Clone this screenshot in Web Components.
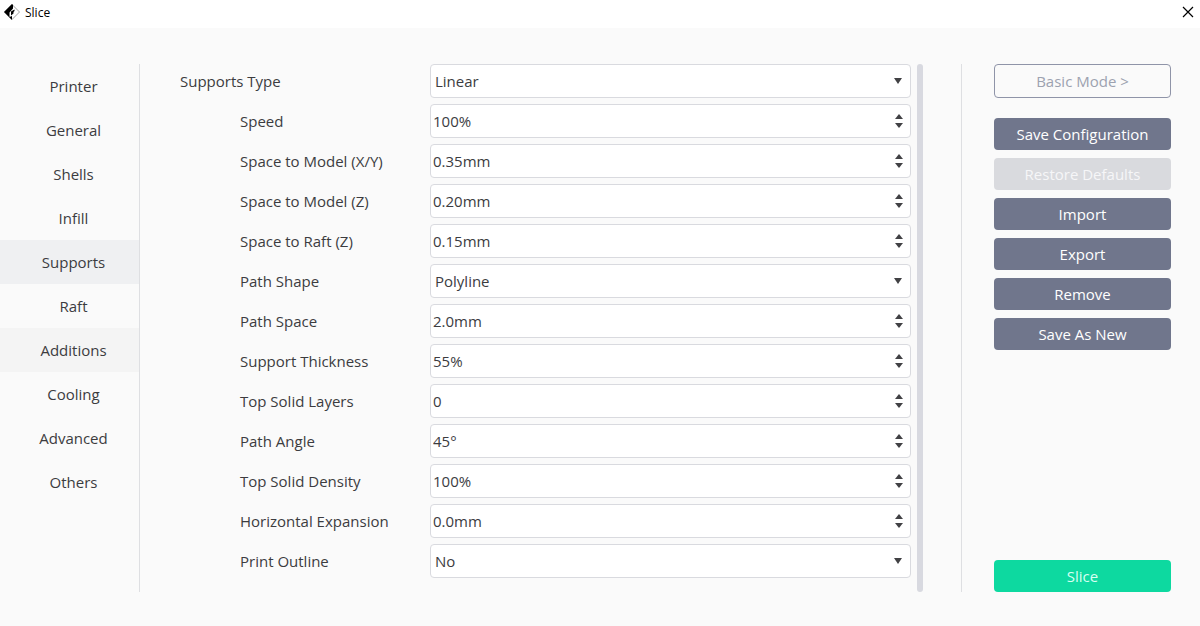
<!DOCTYPE html>
<html lang="en">
<head>
<meta charset="utf-8">
<title>Slice</title>
<style>
  body { margin: 0; background: #fafafa; color: #3c3c3f; font: 15px/20px "Open Sans", "Noto Sans", sans-serif; }
</style>
</head>
<body>
<slice-dialog>
  <title-bar slot="title">Slice</title-bar>
  <side-nav slot="nav">
    <nav-item>Printer</nav-item>
    <nav-item>General</nav-item>
    <nav-item>Shells</nav-item>
    <nav-item>Infill</nav-item>
    <nav-item selected>Supports</nav-item>
    <nav-item>Raft</nav-item>
    <nav-item highlighted>Additions</nav-item>
    <nav-item>Cooling</nav-item>
    <nav-item>Advanced</nav-item>
    <nav-item>Others</nav-item>
  </side-nav>
  <select-field label="Supports Type" value="Linear" options="Treelike"></select-field>
  <spin-field sub label="Speed" value="100%"></spin-field>
  <spin-field sub label="Space to Model (X/Y)" value="0.35mm"></spin-field>
  <spin-field sub label="Space to Model (Z)" value="0.20mm"></spin-field>
  <spin-field sub label="Space to Raft (Z)" value="0.15mm"></spin-field>
  <select-field sub label="Path Shape" value="Polyline" options="Line"></select-field>
  <spin-field sub label="Path Space" value="2.0mm"></spin-field>
  <spin-field sub label="Support Thickness" value="55%"></spin-field>
  <spin-field sub label="Top Solid Layers" value="0"></spin-field>
  <spin-field sub label="Path Angle" value="45°"></spin-field>
  <spin-field sub label="Top Solid Density" value="100%"></spin-field>
  <spin-field sub label="Horizontal Expansion" value="0.0mm"></spin-field>
  <select-field sub label="Print Outline" value="No" options="Yes"></select-field>
  <action-button slot="mode" kind="outline">Basic Mode &gt;</action-button>
  <action-button slot="actions">Save Configuration</action-button>
  <action-button slot="actions" disabled>Restore Defaults</action-button>
  <action-button slot="actions">Import</action-button>
  <action-button slot="actions">Export</action-button>
  <action-button slot="actions">Remove</action-button>
  <action-button slot="actions">Save As New</action-button>
  <action-button slot="primary" kind="primary">Slice</action-button>
</slice-dialog>
<script>
class Base extends HTMLElement {
  constructor() {
    super();
    this.attachShadow({ mode: 'open' });
  }
  connectedCallback() {
    this.shadowRoot.innerHTML = this.render();
  }
}

customElements.define('slice-dialog', class extends Base {
  render() {
    return `<style>
      :host { display: flex; flex-direction: column; min-height: 100vh; }
      .body { flex: 1; display: flex; padding: 36px 0 34px; }
      main { flex: 1; display: flex; gap: 6px; padding: 0 38px 0 40px; }
      form { flex: 1; display: flex; flex-direction: column; gap: 6px; }
      .scroll { width: 6px; border-radius: 3px; background: #d8d9e0; }
      aside { display: flex; flex-direction: column; width: 177px; padding: 0 29px 0 32px; border-left: 1px solid #dedfe2; }
      .actions { display: flex; flex-direction: column; gap: 8px; margin-top: 20px; }
      .primary { margin-top: auto; }
    </style>
    <slot name="title"></slot>
    <div class="body">
      <slot name="nav"></slot>
      <main><form><slot></slot></form><div class="scroll"></div></main>
      <aside>
        <slot name="mode"></slot>
        <div class="actions"><slot name="actions"></slot></div>
        <div class="primary"><slot name="primary"></slot></div>
      </aside>
    </div>`;
  }
});

customElements.define('title-bar', class extends Base {
  render() {
    return `<style>
      :host { display: block; background: #fff; color: #000; font-size: 12px; line-height: 16px; }
      header { display: flex; align-items: center; height: 28px; padding: 0 6px 0 4px; }
      h1 { flex: 1; margin: 0 0 0 5px; font: inherit; padding-bottom: 2px; }
      svg { display: block; }
      .logo { margin-bottom: 4px; }
      button { padding: 0; margin-bottom: 4px; border: 0; background: none; color: inherit; }
    </style>
    <header>
      <svg class="logo" width="16" height="16" viewBox="0 0 16 16" aria-hidden="true">
        <path d="M8 0.5 15.500 8 8 15.500 0.500 8Z" fill="#fff" stroke="#888" stroke-width=".8"/>
        <path d="M8 0 0 8l8 8V12L5.500 13V8.500L9 4.500V1Z" fill="#000"/>
        <path d="M7 7.500 10.500 5.500V7L9.500 8V9.500L7 11.500Z" fill="#000"/>
      </svg>
      <h1><slot></slot></h1>
      <button type="button" aria-label="Close"><svg width="12" height="12" viewBox="0 0 12 12"><path d="M1 1l10 10M11 1 1 11" stroke="#000" stroke-width="1.2"/></svg></button>
    </header>`;
  }
});

customElements.define('side-nav', class extends Base {
  render() {
    return `<style>
      :host { display: block; width: 139px; border-right: 1px solid #dedfe2; }
    </style><nav><slot></slot></nav>`;
  }
});

customElements.define('nav-item', class extends Base {
  render() {
    return `<style>
      :host { display: block; }
      a { display: block; padding: 12px 0 12px 8px; text-align: center; color: inherit; text-decoration: none; }
      :host([selected]) a { background: #eff0f2; }
      :host([highlighted]) a { background: #f4f4f4; }
    </style><a href="#"><slot></slot></a>`;
  }
});

const fieldStyle = `
  :host { display: flex; align-items: center; }
  label { box-sizing: border-box; width: 250px; }
  :host([sub]) label { padding-left: 60px; }
  .box { flex: 1; box-sizing: border-box; height: 34px; display: grid; grid-template-columns: 1fr 9px; padding-right: 7px;
         align-items: center; border: 1px solid #d9dadf; border-radius: 4px; background: #fff; }
  svg { display: block; fill: #414144; }
  input, select { grid-area: 1 / 1; box-sizing: border-box; width: 100%; height: 32px; margin: 0; border: 0; outline: 0;
         background: none; color: inherit; font: inherit; }`;

customElements.define('select-field', class extends Base {
  render() {
    const list = [this.getAttribute('value'), ...this.getAttribute('options').split(',')];
    return `<style>${fieldStyle}
      select { grid-area: 1 / 1 / 2 / 3; appearance: none; padding: 0 4px; }
      svg { grid-area: 1 / 2; pointer-events: none; }
    </style>
    <label for="c">${this.getAttribute('label')}</label>
    <div class="box">
      <select id="c">${list.map(o => `<option>${o}</option>`).join('')}</select>
      <svg width="8" height="6" viewBox="0 0 8 6"><path d="M0 0h8L4 6Z"/></svg>
    </div>`;
  }
});

customElements.define('spin-field', class extends Base {
  render() {
    return `<style>${fieldStyle}
      input { padding: 0 2px; }
      .steps { grid-area: 1 / 2; display: grid; gap: 4px; }
      button { display: grid; justify-content: end; padding: 0; border: 0; background: none; }
    </style>
    <label for="c">${this.getAttribute('label')}</label>
    <div class="box">
      <input id="c" type="text" value="${this.getAttribute('value')}">
      <div class="steps">
        <button type="button" aria-label="Increase"><svg width="8" height="5" viewBox="0 0 8 5"><path d="M0 5h8L4 0Z"/></svg></button>
        <button type="button" aria-label="Decrease"><svg width="8" height="5" viewBox="0 0 8 5"><path d="M0 0h8L4 5Z"/></svg></button>
      </div>
    </div>`;
  }
});

customElements.define('action-button', class extends Base {
  render() {
    return `<style>
      :host { display: block; }
      button { display: block; width: 100%; box-sizing: border-box; height: 32px; padding: 0; border: 0; border-radius: 4px;
               background: #70768c; color: #fff; font: inherit; }
      :host([disabled]) button { background: #d9dade; color: #f6f6f8; }
      :host([kind=outline]) button { height: 34px; border: 1px solid #8f94a8; background: #fafafa; color: #9da2b0; }
      :host([kind=primary]) button { background: #0dd9a0; color: #d8fff2; }
    </style><button type="button"${this.hasAttribute('disabled') ? ' disabled' : ''}><slot></slot></button>`;
  }
});
</script>
</body>
</html>
